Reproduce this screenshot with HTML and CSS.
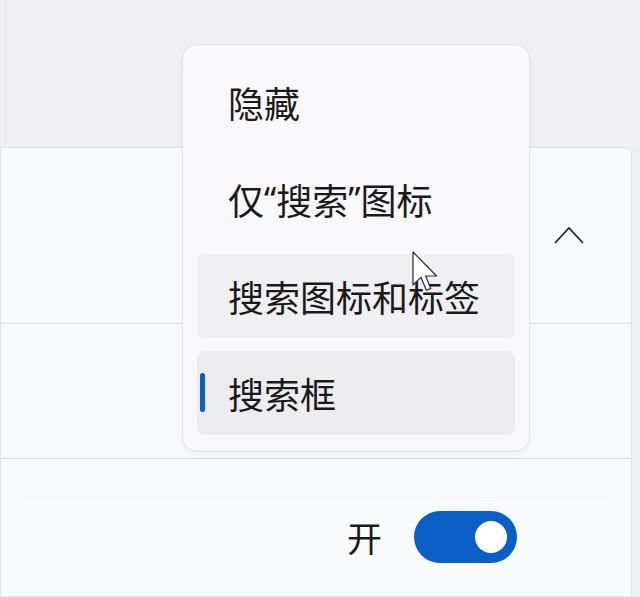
FILE: index.html
```html
<!DOCTYPE html>
<html lang="zh-CN">
<head>
    <meta charset="UTF-8">
    <meta name="viewport" content="width=device-width, initial-scale=1.0">
    <title>任务栏搜索</title>
    <link rel="stylesheet" href="styles.css">
</head>
<body>
    <div class="page">
        <div class="top-area"></div>

        <div class="card">
            <!-- 搜索 标题行 -->
            <div class="row row-header">
                <svg class="chevron" width="32" height="20" viewBox="0 0 32 20">
                    <path d="M2 17 L16 2 L30 17" fill="none" stroke="#1b1b1b" stroke-width="1.6"/>
                </svg>
            </div>
            <!-- 下拉菜单所在行 -->
            <div class="row row-select"></div>
            <!-- 开关行 -->
            <div class="row row-toggle">
                <div class="row-inner">
                    <span class="toggle-label">开</span>
                    <div class="toggle on"><div class="knob"></div></div>
                </div>
            </div>
        </div>

        <!-- 下拉菜单 -->
        <div class="menu">
            <div class="menu-item">隐藏</div>
            <div class="menu-item">仅<span class="quote">“</span>搜索<span class="quote">”</span>图标</div>
            <div class="menu-item hover">搜索图标和标签</div>
            <div class="menu-item selected">搜索框</div>
        </div>

        <svg class="cursor" width="28" height="44" viewBox="0 0 14 22">
            <path d="M0.5 0.5 L0.5 17 L4.5 13.2 L7.2 19.6 L9.4 18.7 L6.8 12.5 L12.3 12.5 Z" fill="#ffffff" stroke="#2a2a2a" stroke-width="0.6" stroke-linejoin="round"/>
        </svg>
    </div>
</body>
</html>
```

FILE: styles.css
```css
body {
    margin: 0;
    background-color: #eff0f3;
    font-family: "Noto Sans CJK SC", "Noto Sans", sans-serif;
    color: #1a1a1a;
}
.page {
    position: relative;
    width: 640px;
    height: 597px;
    overflow: hidden;
}
.top-area {
    height: 147px;
    margin-left: 5px;
    border-left: 1px solid #e6e6e9;
    background: #f1f1f3;
}
.card {
    width: 632px;
    background: #f9fafc;
    border: 1px solid #e2e3e6;
    border-radius: 0 8px 0 0;
    box-sizing: border-box;
    height: 450px;
}
.row {
    display: flex;
    align-items: center;
    justify-content: flex-end;
}
.row-header {
    height: 175px;
    border-bottom: 1px solid #dedfe2;
    padding-right: 46px;
}
.chevron {
    margin-top: 1px;
}
.row-select {
    height: 134px;
    border-bottom: 1px solid #dadbde;
}
.row-toggle {
    height: 139px;
    align-items: flex-start;
}
.row-inner {
    display: flex;
    align-items: center;
    justify-content: flex-end;
    width: 100%;
    margin: 38px 20px 0 20px;
    padding: 13px 94px 0 0;
    border-top: 1px solid #f3f4f7;
    box-sizing: border-box;
}
.toggle-label {
    font-size: 35px;
    line-height: 52px;
    margin-right: 32px;
}
.toggle {
    width: 103px;
    height: 52px;
    border-radius: 26px;
    background: #0a5fc6;
    display: flex;
    align-items: center;
    justify-content: flex-end;
    padding-right: 10px;
    box-sizing: border-box;
}
.knob {
    width: 32px;
    height: 32px;
    border-radius: 50%;
    background: #ffffff;
}
.menu {
    position: absolute;
    left: 182px;
    top: 44px;
    width: 348px;
    height: 408px;
    box-sizing: border-box;
    padding: 15px 14px 0 14px;
    background: #f9f9fb;
    border: 1px solid #e2e3e6;
    border-radius: 15px;
    box-shadow: 0 3px 8px rgba(0,0,0,0.04);
    display: flex;
    flex-direction: column;
    gap: 13px;
}
.menu-item {
    position: relative;
    height: 84px;
    display: flex;
    align-items: center;
    padding-left: 31px;
    font-size: 36px;
    border-radius: 8px;
}
.quote {
    font-family: "Noto Sans", sans-serif;
    font-size: 34px;
}
.menu-item.hover {
    background: #f0f0f3;
}
.menu-item.selected {
    background: #ededf0;
}
.menu-item.selected::before {
    content: "";
    position: absolute;
    left: 3px;
    top: 22px;
    width: 5px;
    height: 39px;
    border-radius: 3px;
    background: #0a5fc6;
}
.cursor {
    position: absolute;
    left: 412px;
    top: 251px;
}
```
